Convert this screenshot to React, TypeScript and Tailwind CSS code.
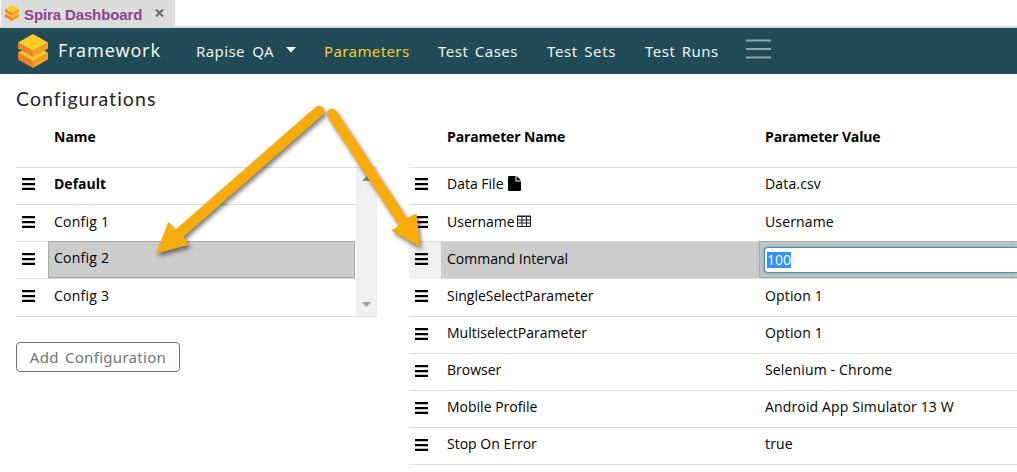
import React from "react";

function Logo({ className }: { className: string }) {
  return (
    <svg className={className} viewBox="0 0 30 34" preserveAspectRatio="none">
      <path d="M0 18.500 4 16.500H26L30 18.500 15 27.500z" fill="#fdcb26" />
      <path d="M0 18.500 15 27v7L0 25.500z" fill="#f0812b" />
      <path d="M30 18.500 15 27v7l15-8.500z" fill="#f4a026" />
      <path d="M0 8.500 15 0l15 8.500L15 17z" fill="#fdcb26" />
      <path d="M0 8.500 15 17v6L0 14.500z" fill="#f0812b" />
      <path d="M30 8.500 15 17v6l15-8.500z" fill="#f4a026" />
    </svg>
  );
}

function Grip() {
  return (
    <svg className="block h-3 w-[13px] -translate-y-px" viewBox="0 0 13 12">
      <path d="M0 0h13v2.300H0zM0 5h13v2.200H0zM0 9.800h13v2.200H0z" fill="#000" />
    </svg>
  );
}

function FileIcon() {
  return (
    <svg className="h-[15px] w-[13px] -translate-y-[2px]" viewBox="0 0 13 15">
      <path d="M0 1.200Q0 0 1.200 0H7.500V5.500H13V13.800Q13 15 11.800 15H1.200Q0 15 0 13.800z" fill="#000" />
      <path d="M8.500 0 13 4.500H8.500z" fill="#000" />
    </svg>
  );
}

function TableIcon() {
  return (
    <svg className="-ml-[2px] h-3 w-[14px] -translate-y-[2px]" viewBox="0 0 14 12">
      <path d="M.5 1.500h13v10H.5zM.5 5h13M.5 8h13M5 1.500v10M9.500 1.500v10" fill="none" stroke="#1d1a22" />
      <path d="M0 .5h14v1.500H0z" fill="#1d1a22" />
    </svg>
  );
}

const configs = [
  { name: "Default", style: "font-bold", row: "h-[37px] pb-[3px]" },
  { name: "Config 1", style: "tracking-[0.25px]", row: "h-[37px] pb-[1px]" },
  { name: "Config 2", style: "", row: "h-[37px] pb-[1px]" },
  { name: "Config 3", style: "tracking-[0.25px]", row: "h-[38px] pb-[2px]" },
];

const params = [
  { name: "Data File", value: "Data.csv", row: "h-[37px] pb-[3px]", icon: "file" },
  { name: "Username", value: "Username", row: "h-[37px] pb-[1px]", icon: "table" },
  { name: "Command Interval", value: "100", row: "h-[37px]", icon: "" },
  { name: "SingleSelectParameter", value: "Option 1", row: "h-[38px] pb-[2px]", icon: "" },
  { name: "MultiselectParameter", value: "Option 1", row: "h-[37px] pb-[2px]", icon: "" },
  { name: "Browser", value: "Selenium - Chrome", row: "h-[37px] pb-[2px]", icon: "" },
  { name: "Mobile Profile", value: "Android App Simulator 13 W", row: "h-[37px] pb-[2px]", icon: "" },
  { name: "Stop On Error", value: "true", row: "h-[37px] pb-[2px]", icon: "" },
];

function Arrows() {
  return (
    <svg className="pointer-events-none absolute inset-0 h-[472px] w-[1017px]" viewBox="0 0 1017 472">
      <g className="drop-shadow-[2px_3px_2px_rgba(0,0,0,0.5)]" fill="#f8ab0b">
        <path d="M319 111 178 234.500" stroke="#f8ab0b" strokeWidth="10.500" strokeLinecap="round" />
        <path d="M156 253.500 168.500 222 176 230 184 237 188.500 245z" />
        <path d="M332 114 405 225" stroke="#f8ab0b" strokeWidth="10.500" strokeLinecap="round" />
        <path d="M420 247 391 230.500 402 224 407 218 416.500 213.500z" />
      </g>
    </svg>
  );
}

export default function App() {
  return (
    <div className="relative h-[472px] w-[1017px] overflow-hidden bg-white font-['Open_Sans','Noto_Sans',sans-serif] text-[14px] text-black">
      <div className="flex h-7 border-b-2 border-[#dcdcdc] pl-px">
        <div className="flex h-[26px] w-[174px] items-center bg-[#dcdcdc] pl-1">
          <Logo className="h-4 w-[14px]" />
          <span className="ml-[5px] w-[118px] pt-[3px] font-['Liberation_Sans',sans-serif] text-[15px] leading-5 font-bold tracking-[-0.12px] whitespace-nowrap text-[#8b4590]">Spira Dashboard</span>
          <svg className="ml-[13px] h-2 w-[9px]" viewBox="0 0 9 8">
            <path d="M1 .5 8 7.500M8 .5 1 7.500" stroke="#666" strokeWidth="2" />
          </svg>
        </div>
      </div>
      <nav className="flex h-[46px] items-center bg-[#204a56] pl-[18px] font-['Noto_Sans',sans-serif] text-[15px] whitespace-nowrap text-[#eef2f3]">
        <Logo className="h-[34px] w-[30px]" />
        <span className="ml-[10px] w-[138px] pb-[2px] text-[18px] tracking-[0.85px]">Framework</span>
        <span className="w-[91px] tracking-[0.4px] [word-spacing:3px]">Rapise QA</span>
        <svg className="-ml-px h-[6px] w-[10px] -translate-y-px" viewBox="0 0 10 6">
          <path d="M0 0h10L5 5.500z" fill="#fff" />
        </svg>
        <span className="ml-[28px] w-[114px] tracking-[0.4px] text-[#fccb26]">Parameters</span>
        <span className="w-[109px] tracking-[0.5px] [word-spacing:2px]">Test Cases</span>
        <span className="w-[98px] tracking-[0.6px] [word-spacing:2px]">Test Sets</span>
        <span className="w-[101px] tracking-[0.5px] [word-spacing:2px]">Test Runs</span>
        <svg className="h-5 w-[25px] -translate-y-[2px]" viewBox="0 0 25 20">
          <path d="M0 1.500h25M0 10h25M0 18.500h25" stroke="#90a5ab" strokeWidth="2" />
        </svg>
      </nav>
      <h1 className="mt-[11px] ml-4 h-7 font-['Lato',sans-serif] text-[19.500px] leading-7 tracking-[1.050px] text-[#212529]">Configurations</h1>
      <main className="flex">
        <section className="ml-4 w-[361px]">
          <div className="flex h-[55px] items-center border-b border-[#dcdcdc] pb-[8px] pl-[38px] font-bold">Name</div>
          <div className="flex">
            <div className="w-[340px]">
              {configs.map((c, i) => (
                <div key={c.name} className={`flex border-b border-[#dcdcdc] ${i === 3 ? "h-[38px]" : "h-[37px]"}`}>
                  <div className={`flex w-8 items-center pl-[6px] ${c.row}`}><Grip /></div>
                  {i === 2 ? (
                    <div className="-mt-px flex h-[37px] w-[307px] items-center border border-[#a7a9a9] bg-[#ccc] pb-[4px] pl-[5px] tracking-[0.25px]">{c.name}</div>
                  ) : (
                    <div className={`flex items-center pl-[6px] ${c.row} ${c.style}`}><span className="-translate-y-[2px]">{c.name}</span></div>
                  )}
                </div>
              ))}
            </div>
            <div className="flex w-[21px] flex-col items-center justify-between border-b border-[#dcdcdc] bg-[#f0f0f0] pt-[8px] pb-[9px]">
              <svg className="h-[5px] w-[9px]" viewBox="0 0 9 5"><path d="M0 5 4.500 0 9 5z" fill="#8d8d8d" /></svg>
              <svg className="h-[5px] w-[9px]" viewBox="0 0 9 5"><path d="M0 0h9L4.500 5z" fill="#a3a3a3" /></svg>
            </div>
          </div>
          <button className="mt-[25px] h-[30px] w-[164px] rounded-[4px] border border-[#6c757d] font-['Noto_Sans',sans-serif] text-[15px] leading-7 tracking-[0.3px] whitespace-nowrap text-[#6c757d] [word-spacing:2px]">Add Configuration</button>
        </section>
        <section className="ml-8 w-[608px]">
          <div className="flex h-[55px] items-center border-b border-[#dcdcdc] pb-[8px] pl-[38px] font-bold tracking-[-0.15px]">
            <span className="w-[318px]">Parameter Name</span>
            <span>Parameter Value</span>
          </div>
          {params.map((p, i) => (
            <div key={p.name} className={`flex border-b border-[#dcdcdc] whitespace-nowrap ${i === 3 ? "h-[38px]" : "h-[37px]"} ${i === 2 ? "bg-[#ccc]" : ""}`}>
              <div className={`flex w-8 items-center pl-[6px] ${p.row} ${i === 2 ? "bg-[#f0f0f0] pb-[1px]" : ""}`}><Grip /></div>
              <div className={`flex w-[318px] items-center gap-1 pl-[6px] ${p.row}`}>
                <span className="-translate-y-[2px]">{p.name}</span>
                {p.icon === "file" && <FileIcon />}
                {p.icon === "table" && <TableIcon />}
              </div>
              {i === 2 ? (
                <div className="-mt-px flex h-[37px] w-[258px] items-center border border-r-0 border-[#a7a9a9] bg-[#c4c8c9] pl-1">
                  <div className="flex h-[26px] w-full items-center rounded-l-[4px] border border-r-0 border-[#3f92b8] bg-white pl-[2px] shadow-[0_0_4px_#7f9ba6]">
                    <span className="h-4 w-6 bg-[#3390ff] leading-4 text-white">100</span>
                  </div>
                </div>
              ) : (
                <div className={`flex items-center pl-[6px] ${p.row}`}><span className="-translate-y-[2px] tracking-[0.15px]">{p.value}</span></div>
              )}
            </div>
          ))}
        </section>
      </main>
      <Arrows />
    </div>
  );
}
